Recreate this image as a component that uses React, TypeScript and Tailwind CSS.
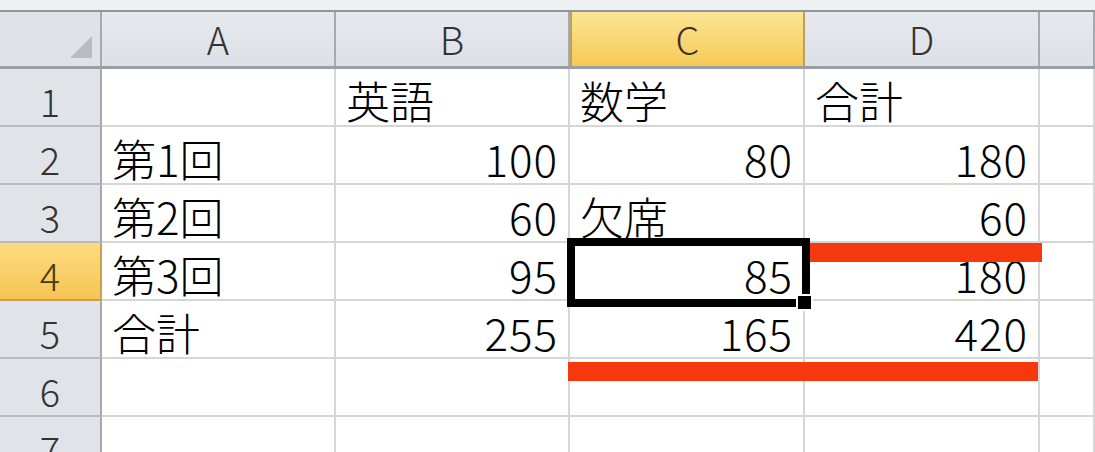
import React from "react";

const cols = ["A", "B", "C", "D", ""];
const widths = ["w-[234px]", "w-[234px]", "w-[235px]", "w-[235px]", "flex-1"];

type Cell = { text: string; right?: boolean };

const rows: Cell[][] = [
  [{ text: "" }, { text: "英語" }, { text: "数学" }, { text: "合計" }],
  [{ text: "第1回" }, { text: "100", right: true }, { text: "80", right: true }, { text: "180", right: true }],
  [{ text: "第2回" }, { text: "60", right: true }, { text: "欠席" }, { text: "60", right: true }],
  [{ text: "第3回" }, { text: "95", right: true }, { text: "85", right: true }, { text: "180", right: true }],
  [{ text: "合計" }, { text: "255", right: true }, { text: "165", right: true }, { text: "420", right: true }],
  [],
  [],
];

const font = { fontFamily: '"Noto Sans CJK JP", "Liberation Sans", sans-serif' };

export default function App() {
  return (
    <div className="w-[1095px] h-[452px] overflow-hidden bg-white relative" style={font}>
      {/* top strip */}
      <div className="h-[12px] bg-[#eef0f3] border-b-2 border-[#8f949a]" />

      {/* column headers */}
      <div className="flex h-[57px] border-b-[3px] border-[#9a9fa5]">
        <div className="w-[102px] shrink-0 bg-[#dfe3e8] border-r-2 border-[#a5aab0] flex items-end justify-end p-[8px]">
          <svg width="22" height="22" viewBox="0 0 22 22">
            <polygon points="22,0 22,22 0,22" fill="#b9bdc2" />
          </svg>
        </div>
        {cols.map((c, i) => (
          <div
            key={i}
            className={`${widths[i]} shrink-0 flex items-center justify-center text-[38px] font-light leading-none border-r-2 ${
              c === "C"
                ? "bg-gradient-to-b from-[#fce593] to-[#f6c955] border-[#b8a060] border-l-2 text-[#3c3020]"
                : "bg-gradient-to-b from-[#e6e9ee] to-[#dde1e7] border-[#a5aab0] text-[#333]"
            }`}
          >
            {c}
          </div>
        ))}
      </div>

      {/* rows */}
      {rows.map((r, ri) => (
        <div key={ri} className="flex h-[58px]">
          <div
            className={`w-[102px] shrink-0 border-r-2 flex items-end justify-center pb-[5px] text-[38px] font-light leading-none ${
              ri === 3
                ? "bg-gradient-to-b from-[#fcdc80] to-[#f6c452] border-[#c9a050] border-b-2 text-[#4a3810]"
                : "bg-[#e0e4e9] border-[#a5aab0] border-b-2 border-b-[#b8bcc2] text-[#333]"
            }`}
          >
            {ri + 1}
          </div>
          {widths.map((w, ci) => {
            const cell = r[ci];
            return (
              <div
                key={ci}
                className={`${w} shrink-0 border-r-2 border-b-2 border-[#d6d6d6] flex items-end px-[10px] pb-[3px] text-[44px] font-light leading-none text-black ${
                  cell?.right ? "justify-end tracking-[1px]" : "justify-start"
                }`}
              >
                {cell?.text}
              </div>
            );
          })}
        </div>
      ))}

      {/* active cell C4 */}
      <div className="absolute left-[567px] top-[238px] w-[243px] h-[69px] border-[8px] border-black" />
      <div className="absolute left-[796px] top-[294px] w-[17px] h-[17px] bg-black border-2 border-white" />

      {/* red marker lines */}
      <div className="absolute left-[810px] top-[243px] w-[232px] h-[19px] bg-[#f5380d]" />
      <div className="absolute left-[568px] top-[362px] w-[470px] h-[19px] bg-[#f5380d]" />
    </div>
  );
}
